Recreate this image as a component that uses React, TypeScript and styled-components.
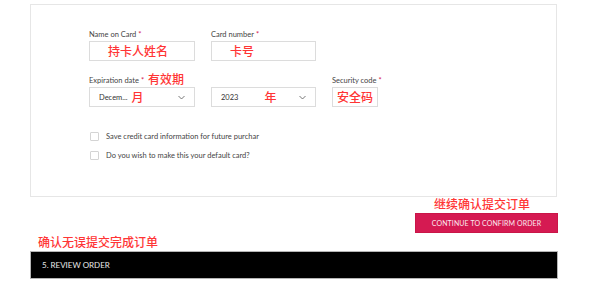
import styled, { createGlobalStyle } from "styled-components";

const GlobalStyle = createGlobalStyle`
    body {
        margin: 0;
        background: #fff;
        font-family: Lato, "Liberation Sans", sans-serif;
        color: #333;
    }
`;

const Page = styled.div`
    width: 528px;
    padding: 4px 0 0 30px;
`;

const Panel = styled.div`
    box-sizing: border-box;
    width: 527px;
    height: 193px;
    border: 1px solid #e6e6e6;
    padding: 25px 0 0 58px;
`;

const FieldGrid = styled.div`
    display: grid;
    grid-template-columns: 106px 105px 46px;
    column-gap: 16px;
    row-gap: 15px;
`;

const Field = styled.div`
    display: flex;
    flex-flow: column;
`;

const Label = styled.label`
    display: flex;
    align-items: flex-end;
    height: 9px;
    margin-bottom: 2px;
    font-size: 7.5px;
    line-height: 9px;
    color: #444;
    white-space: nowrap;

    b {
        color: #d51a52;
        font-weight: 400;
        margin-left: 2px;
    }
`;

const Note = styled.span<{ $ml?: number }>`
    margin-left: ${(p) => p.$ml ?? 0}px;
    font-family: "Noto Sans CJK SC", sans-serif;
    font-size: 12px;
    font-weight: 500;
    line-height: 14px;
    color: #ff3535;
    white-space: nowrap;
`;

const LabelNote = styled(Note)`
    margin-left: 4px;
    line-height: 12px;
`;

const InputBox = styled.div<{ $pad: number }>`
    box-sizing: border-box;
    display: flex;
    align-items: center;
    height: 20px;
    padding-left: ${(p) => p.$pad}px;
    border: 1px solid #dcdcdc;
`;

const SelectBox = styled.div`
    box-sizing: border-box;
    display: flex;
    align-items: center;
    height: 20px;
    padding: 0 9px;
    border: 1px solid #dcdcdc;
    font-size: 7.5px;
    color: #333;
`;

const Chevron = styled.svg`
    margin-left: auto;
    width: 7px;
    height: 5px;
`;

const Checks = styled.div`
    display: flex;
    flex-flow: column;
    gap: 10px;
    margin-top: 25px;
    margin-left: 1px;
`;

const CheckRow = styled.div`
    display: flex;
    align-items: center;
    gap: 7px;
    font-size: 7.5px;
    color: #444;
    white-space: nowrap;
`;

const Box = styled.span`
    box-sizing: border-box;
    width: 9px;
    height: 9px;
    border: 1px solid #d4d4d4;
    border-radius: 1px;
`;

const Actions = styled.div`
    display: flex;
    flex-flow: column;
    align-items: flex-end;
`;

const ActionNote = styled(Note)`
    margin-right: 28px;
`;

const ConfirmButton = styled.button`
    box-sizing: border-box;
    width: 143px;
    height: 20px;
    margin-top: 2px;
    border: 1px solid #c91648;
    background: #d51a52;
    color: #fbe9ee;
    font-family: Lato, "Liberation Sans", sans-serif;
    font-size: 7px;
    letter-spacing: 0.1px;
    text-transform: uppercase;
    cursor: pointer;
`;

const SectionNote = styled(Note)`
    display: block;
    margin: 2px 0 0 8px;
`;

const SectionBar = styled.div`
    box-sizing: border-box;
    display: flex;
    align-items: center;
    height: 28px;
    margin-top: 2px;
    padding-left: 11px;
    background: #000;
    border: 1px solid #b5b5b5;
    color: #e8e8e8;
    font-size: 8px;
    text-transform: uppercase;
`;

function Down() {
    return (
        <Chevron viewBox="0 0 7 5">
            <path d="M0.5 1 L3.5 4 L6.5 1" fill="none" stroke="#555" strokeWidth="0.8" />
        </Chevron>
    );
}

export default function App() {
    return (
        <>
            <GlobalStyle />
            <Page>
                <Panel>
                    <FieldGrid>
                        <Field>
                            <Label>
                                Name on Card<b>*</b>
                            </Label>
                            <InputBox $pad={18}>
                                <Note>持卡人姓名</Note>
                            </InputBox>
                        </Field>
                        <Field>
                            <Label>
                                Card number<b>*</b>
                            </Label>
                            <InputBox $pad={18}>
                                <Note>卡号</Note>
                            </InputBox>
                        </Field>
                        <div />

                        <Field>
                            <Label>
                                Expiration date<b>*</b>
                                <LabelNote>有效期</LabelNote>
                            </Label>
                            <SelectBox>
                                Decem...
                                <Note $ml={4}>月</Note>
                                <Down />
                            </SelectBox>
                        </Field>
                        <Field>
                            <Label />
                            <SelectBox>
                                2023
                                <Note $ml={26}>年</Note>
                                <Down />
                            </SelectBox>
                        </Field>
                        <Field>
                            <Label>
                                Security code<b>*</b>
                            </Label>
                            <InputBox $pad={4}>
                                <Note>安全码</Note>
                            </InputBox>
                        </Field>
                    </FieldGrid>

                    <Checks>
                        <CheckRow>
                            <Box />
                            Save credit card information for future purchar
                        </CheckRow>
                        <CheckRow>
                            <Box />
                            Do you wish to make this your default card?
                        </CheckRow>
                    </Checks>
                </Panel>

                <Actions>
                    <ActionNote>继续确认提交订单</ActionNote>
                    <ConfirmButton>Continue to confirm order</ConfirmButton>
                </Actions>

                <SectionNote>确认无误提交完成订单</SectionNote>
                <SectionBar>5. Review order</SectionBar>
            </Page>
        </>
    );
}
